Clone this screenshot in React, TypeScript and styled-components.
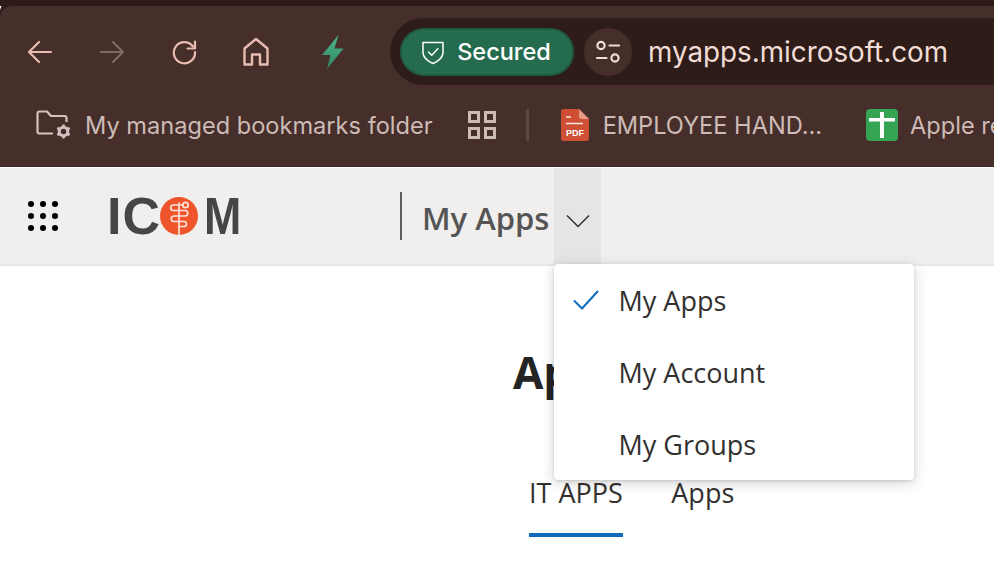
import React from 'react';
import styled, {createGlobalStyle} from "styled-components";

const GlobalStyle = createGlobalStyle`
  html, body {
    margin: 0;
    padding: 0;
    width: 994px;
    height: 580px;
    overflow: hidden;
    background: #ffffff;
  }
  * {
    box-sizing: border-box;
  }
`

const App = () => {
    return (
        <Base>
            <GlobalStyle/>
            <TopStrip/>
            <Browser>
                <NavRow>
                    <NavButton>
                        <svg width="26" height="24" viewBox="0 0 26 24" fill="none" stroke="#e8bcb0" strokeWidth="2.2" strokeLinecap="round" strokeLinejoin="round">
                            <path d="M24 12H2M12 2 2 12l10 10"/>
                        </svg>
                    </NavButton>
                    <NavButton>
                        <svg width="26" height="24" viewBox="0 0 26 24" fill="none" stroke="#816a64" strokeWidth="2.2" strokeLinecap="round" strokeLinejoin="round">
                            <path d="M2 12h22M14 2l10 10-10 10"/>
                        </svg>
                    </NavButton>
                    <NavButton>
                        <svg width="26" height="26" viewBox="0 0 26 26" fill="none" stroke="#e8bcb0" strokeWidth="2.2" strokeLinecap="round" strokeLinejoin="round">
                            <path d="M22 7.500A10.600 10.600 0 1 0 24 13"/>
                            <path d="M24 2.500v7h-7.500"/>
                        </svg>
                    </NavButton>
                    <NavButton>
                        <svg width="26" height="30" viewBox="0 0 26 30" fill="none" stroke="#e8bcb0" strokeWidth="2.4" strokeLinejoin="round">
                            <path d="M1.500 11.500 13 2l11.500 9.500V27.500h-7.500V17.500H9V27.500H1.500Z"/>
                        </svg>
                    </NavButton>
                    <BoltButton>
                        <svg width="24" height="36" viewBox="0 0 24 36">
                            <defs>
                                <linearGradient id="bolt" x1="0" y1="0" x2="0" y2="1">
                                    <stop offset="0" stopColor="#4fb88c"/>
                                    <stop offset="1" stopColor="#2f8461"/>
                                </linearGradient>
                            </defs>
                            <path d="M17.500 1 1 21h8.500L6 35 22.500 14.500H13.500Z" fill="url(#bolt)"/>
                        </svg>
                    </BoltButton>
                    <AddressBar>
                        <SecuredPill>
                            <svg width="24" height="26" viewBox="0 0 24 26" fill="none" stroke="#ffffff" strokeWidth="1.500" strokeLinecap="round" strokeLinejoin="round">
                                <path d="M2 3.500h20v10c0 5.500-4.500 8.500-10 11-5.500-2.500-10-5.500-10-11Z"/>
                                <path d="m7.500 13 3.300 3.300 6-6.500"/>
                            </svg>
                            Secured
                        </SecuredPill>
                        <SiteButton>
                            <svg width="26" height="24" viewBox="0 0 26 24" fill="none" stroke="#f1dcd6" strokeWidth="2.200" strokeLinecap="round">
                                <circle cx="6" cy="5.500" r="3.600"/>
                                <path d="M14.500 5.500H24"/>
                                <circle cx="20" cy="18" r="3.600"/>
                                <path d="M2 18h9.500"/>
                            </svg>
                        </SiteButton>
                        <Url>myapps.microsoft.com</Url>
                    </AddressBar>
                </NavRow>
                <BookmarkRow>
                    <FolderItem>
                        <svg width="36" height="30" viewBox="0 0 36 30" fill="none">
                            <path d="M17 23.500H3.500a2 2 0 0 1-2-2V3.500a2 2 0 0 1 2-2h7.500l4 4.500h13.500a2 2 0 0 1 2 2v4" stroke="#d3c2bd" strokeWidth="2.200" strokeLinejoin="round"/>
                            <circle cx="27.500" cy="21.500" r="4.300" stroke="#d3c2bd" strokeWidth="3"/>
                            <path d="M27.500 14.500v3M27.500 25.500v3M21.300 18l2.600 1.500M31 23.500l2.600 1.500M21.300 25l2.600-1.500M31 19.500l2.600-1.500" stroke="#d3c2bd" strokeWidth="2.600"/>
                        </svg>
                        <BookmarkText>My managed bookmarks folder</BookmarkText>
                    </FolderItem>
                    <GridIcon>
                        <GridCell/><GridCell/><GridCell/><GridCell/>
                    </GridIcon>
                    <Divider/>
                    <PdfItem>
                        <svg width="28" height="32" viewBox="0 0 28 32">
                            <path d="M2.500 0H18l10 10v19.500a2.500 2.500 0 0 1-2.500 2.500h-23A2.500 2.500 0 0 1 0 29.500v-27A2.500 2.500 0 0 1 2.500 0Z" fill="#cf4f35"/>
                            <path d="M18 0l10 10h-7.500A2.500 2.500 0 0 1 18 7.500Z" fill="#e79a86"/>
                            <path d="M5 8h5M5 14.500h17" stroke="#fbe6e0" strokeWidth="1.500"/>
                            <text x="14" y="27" textAnchor="middle" fontFamily="'Liberation Sans', sans-serif" fontWeight="700" fontSize="9" fill="#ffffff">PDF</text>
                        </svg>
                        <BookmarkText>EMPLOYEE HAND...</BookmarkText>
                    </PdfItem>
                    <SheetItem>
                        <SheetIcon>
                            <svg width="26" height="26" viewBox="0 0 26 26" fill="#ffffff">
                                <path d="M0 6h26v3.500H0Z"/>
                                <path d="M11 0h4v26h-4Z"/>
                            </svg>
                        </SheetIcon>
                        <BookmarkText>Apple reports</BookmarkText>
                    </SheetItem>
                </BookmarkRow>
            </Browser>
            <AppHeader>
                <Waffle>
                    {Array.from({length: 9}).map((_, i) => <Dot key={i}/>)}
                </Waffle>
                <Logo>
                    <LogoLetters>IC</LogoLetters>
                    <LogoMark width="38" height="38" viewBox="0 0 38 38">
                        <circle cx="19" cy="19" r="19" fill="#ee552b"/>
                        <g fill="none" stroke="#fbe3da" strokeWidth="1.700" strokeLinecap="round">
                            <path d="M19 6v32"/>
                            <circle cx="25.500" cy="8" r="2.700"/>
                            <path d="M23 8h-9.500a2.500 2.500 0 0 0 0 5.500h11.500a2.500 2.500 0 0 1 0 5.500H14a2.500 2.500 0 0 0 0 5.500h10a2.500 2.500 0 0 1 0 5H20"/>
                        </g>
                    </LogoMark>
                    <LogoEnd>M</LogoEnd>
                </Logo>
                <AppSwitch>My Apps</AppSwitch>
                <ChevronButton>
                    <svg width="24" height="14" viewBox="0 0 24 14" fill="none" stroke="#323130" strokeWidth="1.500">
                        <path d="M1 1.500 12 12.500 23 1.500"/>
                    </svg>
                </ChevronButton>
            </AppHeader>
            <Main>
                <Title>Apps</Title>
                <Tabs>
                    <Tab $active>IT APPS</Tab>
                    <Tab>Apps</Tab>
                </Tabs>
            </Main>
            <Menu>
                <MenuItem>
                    <CheckSlot>
                        <svg width="26" height="20" viewBox="0 0 26 20" fill="none" stroke="#0f6cbd" strokeWidth="2">
                            <path d="M1 10.500 9 18.500 25 1"/>
                        </svg>
                    </CheckSlot>
                    My Apps
                </MenuItem>
                <MenuItem><CheckSlot/>My Account</MenuItem>
                <MenuItem><CheckSlot/>My Groups</MenuItem>
            </Menu>
        </Base>
    );
};

export default App;

const Base = styled.div`
  position: relative;
  width: 994px;
  height: 580px;
  overflow: hidden;
  display: flex;
  flex-direction: column;
  background: #ffffff;
`

const TopStrip = styled.div`
  height: 6px;
  flex: none;
  background: #2e1b18;
`

const Browser = styled.div`
  flex: none;
  height: 161px;
  background: #462e2b;
  border-radius: 12px 0 0 0;
  border-bottom: 1px solid #3a2623;
  box-shadow: 0 -6px 0 #2e1b18;
  display: flex;
  flex-direction: column;
`

const NavRow = styled.div`
  display: flex;
  align-items: center;
  height: 67px;
  margin-top: 12px;
  padding-left: 4px;
`

const NavButton = styled.div`
  width: 72px;
  flex: none;
  display: flex;
  align-items: center;
  justify-content: center;
`

const BoltButton = styled(NavButton)`
  margin-left: 5px;
  margin-right: 21px;
`

const AddressBar = styled.div`
  flex: 1;
  height: 67px;
  display: flex;
  align-items: center;
  padding-left: 10px;
  background: #2e1c18;
  border-radius: 34px 0 0 34px;
  font-family: Inter, "Liberation Sans", sans-serif;
`

const SecuredPill = styled.div`
  width: 174px;
  height: 48px;
  flex: none;
  display: flex;
  align-items: center;
  justify-content: center;
  gap: 12px;
  padding-right: 2px;
  background: #256b4d;
  border: 2px solid #1f5a41;
  border-radius: 24px;
  color: #ffffff;
  font-size: 23.500px;
  font-weight: 500;
`

const SiteButton = styled.div`
  width: 48px;
  height: 48px;
  flex: none;
  margin-left: 10px;
  display: flex;
  align-items: center;
  justify-content: center;
  background: #462e2b;
  border-radius: 50%;
`

const Url = styled.div`
  margin-left: 16px;
  color: #f1dcd6;
  font-size: 27.800px;
  white-space: nowrap;
`

const BookmarkRow = styled.div`
  display: flex;
  align-items: center;
  height: 50px;
  margin-top: 15px;
  padding-left: 36px;
  white-space: nowrap;
  font-family: Inter, "Liberation Sans", sans-serif;
`

const BookmarkText = styled.span`
  color: #cdbbb6;
  font-size: 23.600px;
`

const FolderItem = styled.div`
  display: flex;
  align-items: center;
  gap: 13px;
  flex: none;
`

const GridIcon = styled.div`
  display: grid;
  grid-template-columns: 12px 12px;
  gap: 4px;
  margin-left: 35px;
  flex: none;
`

const GridCell = styled.div`
  width: 12px;
  height: 12px;
  border: 3px solid #cdbbb6;
`

const Divider = styled.div`
  width: 3px;
  height: 32px;
  margin-left: 30px;
  flex: none;
  border-radius: 2px;
  background: #5f4843;
`

const PdfItem = styled.div`
  display: flex;
  align-items: center;
  gap: 14px;
  margin-left: 32px;
  flex: none;
`

const SheetItem = styled.div`
  display: flex;
  align-items: center;
  gap: 12px;
  margin-left: 44px;
  flex: none;
`

const SheetIcon = styled.div`
  width: 32px;
  height: 32px;
  display: flex;
  align-items: center;
  justify-content: center;
  background: #35a452;
  border-radius: 4px;
`

const AppHeader = styled.div`
  flex: none;
  height: 98px;
  display: flex;
  align-items: center;
  margin-top: 1px;
  padding-left: 28px;
  background: #f0efed;
  border-bottom: 2px solid #e8e7e5;
`

const Waffle = styled.div`
  display: grid;
  grid-template-columns: repeat(3, 6px);
  gap: 6px;
  flex: none;
`

const Dot = styled.div`
  width: 6px;
  height: 6px;
  border-radius: 50%;
  background: #000000;
`

const Logo = styled.div`
  display: flex;
  align-items: center;
  width: 134px;
  margin-left: 49px;
  margin-right: 1px;
  flex: none;
`

const LogoLetters = styled.span`
  flex: none;
  width: 51px;
  color: #454746;
  font-family: "Liberation Sans", Arial, sans-serif;
  font-size: 52px;
  line-height: 38px;
  font-weight: 700;
  letter-spacing: 1px;
  white-space: nowrap;
`

const LogoEnd = styled(LogoLetters)`
  width: 37px;
  margin-left: 6px;
  letter-spacing: 0;
  transform: scaleX(0.86);
  transform-origin: left center;
`

const LogoMark = styled.svg`
  flex: none;
  margin-left: 2px;
`

const AppSwitch = styled.div`
  height: 48px;
  margin-left: 158px;
  padding: 3px 0 0 20px;
  display: flex;
  align-items: center;
  width: 154px;
  flex: none;
  border-left: 2px solid #605e5c;
  color: #555555;
  font-family: "Open Sans", "Noto Sans", sans-serif;
  font-size: 31px;
  font-weight: 600;
  white-space: nowrap;
`

const ChevronButton = styled.div`
  width: 47px;
  height: 98px;
  margin-top: 2px;
  flex: none;
  display: flex;
  align-items: center;
  justify-content: center;
  padding-top: 8px;
  background: #e7e5e3;
`

const Main = styled.div`
  flex: 1;
  display: flex;
  flex-direction: column;
  align-items: flex-start;
  padding: 76px 0 0 513px;
  font-family: "Open Sans", "Noto Sans", sans-serif;
`

const Title = styled.h1`
  margin: 0;
  color: #242424;
  font-size: 44px;
  line-height: 60px;
  font-weight: 700;
`

const Tabs = styled.div`
  display: flex;
  gap: 48.500px;
  margin-top: 22px;
  margin-left: 16px;
`

const Tab = styled.div<{$active?: boolean}>`
  height: 113px;
  padding-top: 51px;
  margin-bottom: -44px;
  color: #323130;
  font-size: 27px;
  line-height: 36px;
  border-bottom: 4px solid ${props => props.$active ? '#0f6cbd' : 'transparent'};
`

const Menu = styled.div`
  position: absolute;
  top: 264px;
  left: 554px;
  width: 360px;
  height: 216px;
  display: flex;
  flex-direction: column;
  background: #ffffff;
  border-radius: 4px;
  box-shadow: 0 3px 14px rgba(0, 0, 0, 0.18), 0 1px 3px rgba(0, 0, 0, 0.12);
  font-family: "Open Sans", "Noto Sans", sans-serif;
`

const MenuItem = styled.div`
  height: 72px;
  display: flex;
  align-items: center;
  color: #323130;
  font-size: 27px;
`

const CheckSlot = styled.div`
  width: 64.500px;
  flex: none;
  display: flex;
  justify-content: center;
`
